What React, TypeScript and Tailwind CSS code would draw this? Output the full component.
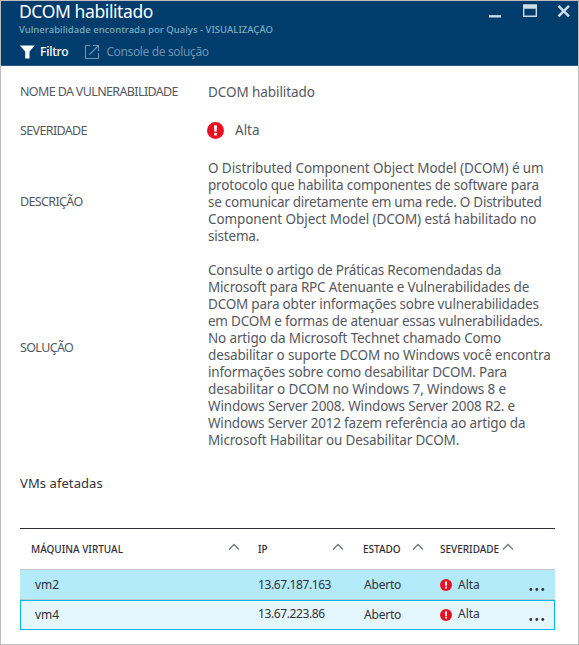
import React from "react";

type Line = { text: string; tracking: string };

const description: Line[] = [
  { text: "O Distributed Component Object Model (DCOM) é um", tracking: "tracking-[-0.09px]" },
  { text: "protocolo que habilita componentes de software para", tracking: "tracking-[-0.19px]" },
  { text: "se comunicar diretamente em uma rede. O Distributed", tracking: "tracking-[-0.26px]" },
  { text: "Component Object Model (DCOM) está habilitado no", tracking: "tracking-[-0.09px]" },
  { text: "sistema.", tracking: "tracking-[-0.2px]" },
];

const solution: Line[] = [
  { text: "Consulte o artigo de Práticas Recomendadas da", tracking: "tracking-[-0.2px]" },
  { text: "Microsoft para RPC Atenuante e Vulnerabilidades de", tracking: "tracking-[-0.18px]" },
  { text: "DCOM para obter informações sobre vulnerabilidades", tracking: "tracking-[-0.21px]" },
  { text: "em DCOM e formas de atenuar essas vulnerabilidades.", tracking: "tracking-[-0.24px]" },
  { text: "No artigo da Microsoft Technet chamado Como", tracking: "tracking-[-0.15px]" },
  { text: "desabilitar o suporte DCOM no Windows você encontra", tracking: "tracking-[-0.14px]" },
  { text: "informações sobre como desabilitar DCOM. Para", tracking: "tracking-[-0.2px]" },
  { text: "desabilitar o DCOM no Windows 7, Windows 8 e", tracking: "tracking-[-0.1px]" },
  { text: "Windows Server 2008. Windows Server 2008 R2. e", tracking: "tracking-[-0.15px]" },
  { text: "Windows Server 2012 fazem referência ao artigo da", tracking: "tracking-[-0.18px]" },
  { text: "Microsoft Habilitar ou Desabilitar DCOM.", tracking: "tracking-[-0.16px]" },
];

function Alert({ className }: { className: string }) {
  return (
    <svg viewBox="0 0 17 17" className={className}>
      <circle cx="8.5" cy="8.5" r="8.5" fill="#e81123" />
      <path d="M7 3.5h3l-.4 6.300h-2.200z" fill="#fff" />
      <rect x="7.200" y="11" width="2.600" height="2.400" fill="#fff" />
    </svg>
  );
}

function Caret() {
  return (
    <svg width="12" height="8" viewBox="0 0 12 8" fill="none" stroke="#73767b" strokeWidth="1.4" className="mb-[5px] shrink-0">
      <path d="M1 6.500 6 1.500 11 6.500" />
    </svg>
  );
}

function Dots() {
  return (
    <svg width="16" height="3" viewBox="0 0 16 3" fill="#2f3037">
      <circle cx="1.800" cy="1.500" r="1.400" />
      <circle cx="7.800" cy="1.500" r="1.400" />
      <circle cx="13.800" cy="1.500" r="1.400" />
    </svg>
  );
}

function Lines({ lines }: { lines: Line[] }) {
  return (
    <div className="text-[13.5px] leading-[17px]">
      {lines.map((line) => (
        <div key={line.text} className={line.tracking}>{line.text}</div>
      ))}
    </div>
  );
}

const label = "w-[188px] shrink-0 text-[12.5px] leading-4 tracking-[-0.63px]";
const cols = "grid grid-cols-[238px_105px_77px_89px_1fr]";

export default function App() {
  return (
    <div className="flex h-[645px] w-[579px] flex-col overflow-hidden whitespace-nowrap border border-[#bebebe] bg-white font-['Noto_Sans',sans-serif] text-[#55585e]">
      <header className="flex h-[65px] shrink-0 justify-between border-b border-[#2c5a87] bg-[#003c6c] pl-[18px] text-white">
        <div>
          <h1 className="h-[21px] text-[17.5px] leading-[21px] tracking-[-0.4px]">DCOM habilitado</h1>
          <p className="h-4 text-[9.5px] font-medium leading-4 tracking-[0.03px] text-[#7fadc0]">Vulnerabilidade encontrada por Qualys - VISUALIZAÇÃO</p>
          <div className="flex h-[27px] items-center text-[12px]">
            <svg width="16" height="14" viewBox="0 0 16 14" fill="#fff">
              <path d="M.8.500h15L10.500 6.500V13.500H6.200V6.500z" />
            </svg>
            <span className="ml-[5px] font-medium tracking-[-0.2px]">Filtro</span>
            <svg width="16" height="16" viewBox="0 0 16 16" fill="none" stroke="#6f93ae" strokeWidth="1.1" className="ml-4">
              <path d="M6 1.500H1.500v13h13V9M5.500 10.500 14.500 1.500M9 1.500h5.500v5.500" />
            </svg>
            <span className="ml-[6px] tracking-[-0.36px] text-[#6f93ae]">Console de solução</span>
          </div>
        </div>
        <svg width="89" height="20" viewBox="0 0 89 20" fill="none" stroke="#cfdbe5">
          <path d="M0 15.300h12" strokeWidth="2.400" />
          <path d="M34.700 5v10.300h12.600V5" strokeWidth="1.400" />
          <path d="M34 5.500h14" strokeWidth="4.500" />
          <path d="m69.500 4.800 10.500 10.500m0-10.500L69.500 15.300" strokeWidth="2.600" />
        </svg>
      </header>

      <main className="flex flex-col pl-[19px]">
        <div className="mt-[17px] flex h-[18px] items-center">
          <div className={label}>NOME DA VULNERABILIDADE</div>
          <div className="text-[13.5px] leading-[17px] tracking-[-0.08px]">DCOM habilitado</div>
        </div>
        <div className="mt-5 flex h-[18px] items-center">
          <div className={`${label} pt-0.5`}>SEVERIDADE</div>
          <Alert className="-ml-px size-[17px]" />
          <div className="ml-[11px] text-[13.5px] leading-[17px]">Alta</div>
        </div>
        <div className="mt-[21px] flex h-[85px] items-center">
          <div className={`${label} pb-0.5`}>DESCRIÇÃO</div>
          <Lines lines={description} />
        </div>
        <div className="mt-[17px] flex h-[187px]">
          <div className={`${label} pt-[78px]`}>SOLUÇÃO</div>
          <Lines lines={solution} />
        </div>
        <h2 className="mt-[25px] h-[18px] text-[13px] leading-[18px] tracking-[0.08px] text-[#33333d]">VMs afetadas</h2>

        <section className="mt-9 w-[535px] border-t border-[#2f3037] text-[12px] text-[#2f3037]">
          <div className={`${cols} h-[40px] items-center text-[10px] font-medium`}>
            <div className="flex items-center justify-between pl-[11px] pr-[18px]">MÁQUINA VIRTUAL<Caret /></div>
            <div className="flex items-center justify-between pr-[19px]">IP<Caret /></div>
            <div className="flex items-center justify-between pr-4">ESTADO<Caret /></div>
            <div className="flex items-center gap-[3px]">SEVERIDADE<Caret /></div>
          </div>
          <div className={`${cols} h-[31px] items-center border-y border-[#c6c6c6] bg-[#b3ebfb]`}>
            <div className="pl-[15px]">vm2</div>
            <div className="tracking-[-0.4px]">13.67.187.163</div>
            <div className="pl-px tracking-[-0.2px]">Aberto</div>
            <div className="flex items-center gap-[6px]"><Alert className="size-3" />Alta</div>
            <div className="pt-[9px]"><Dots /></div>
          </div>
          <div className="h-[30px] border border-[#00b7ed] bg-[#e5f7fe]">
            <div className={`${cols} -mx-px h-7 items-center`}>
              <div className="pl-[15px]">vm4</div>
              <div className="pb-[2px] tracking-[-0.4px]">13.67.223.86</div>
              <div className="pl-px tracking-[-0.2px]">Aberto</div>
              <div className="flex items-center gap-[6px]"><Alert className="size-3" /><span className="pb-[2px]">Alta</span></div>
              <div className="pt-[9px]"><Dots /></div>
            </div>
          </div>
        </section>
      </main>
    </div>
  );
}
